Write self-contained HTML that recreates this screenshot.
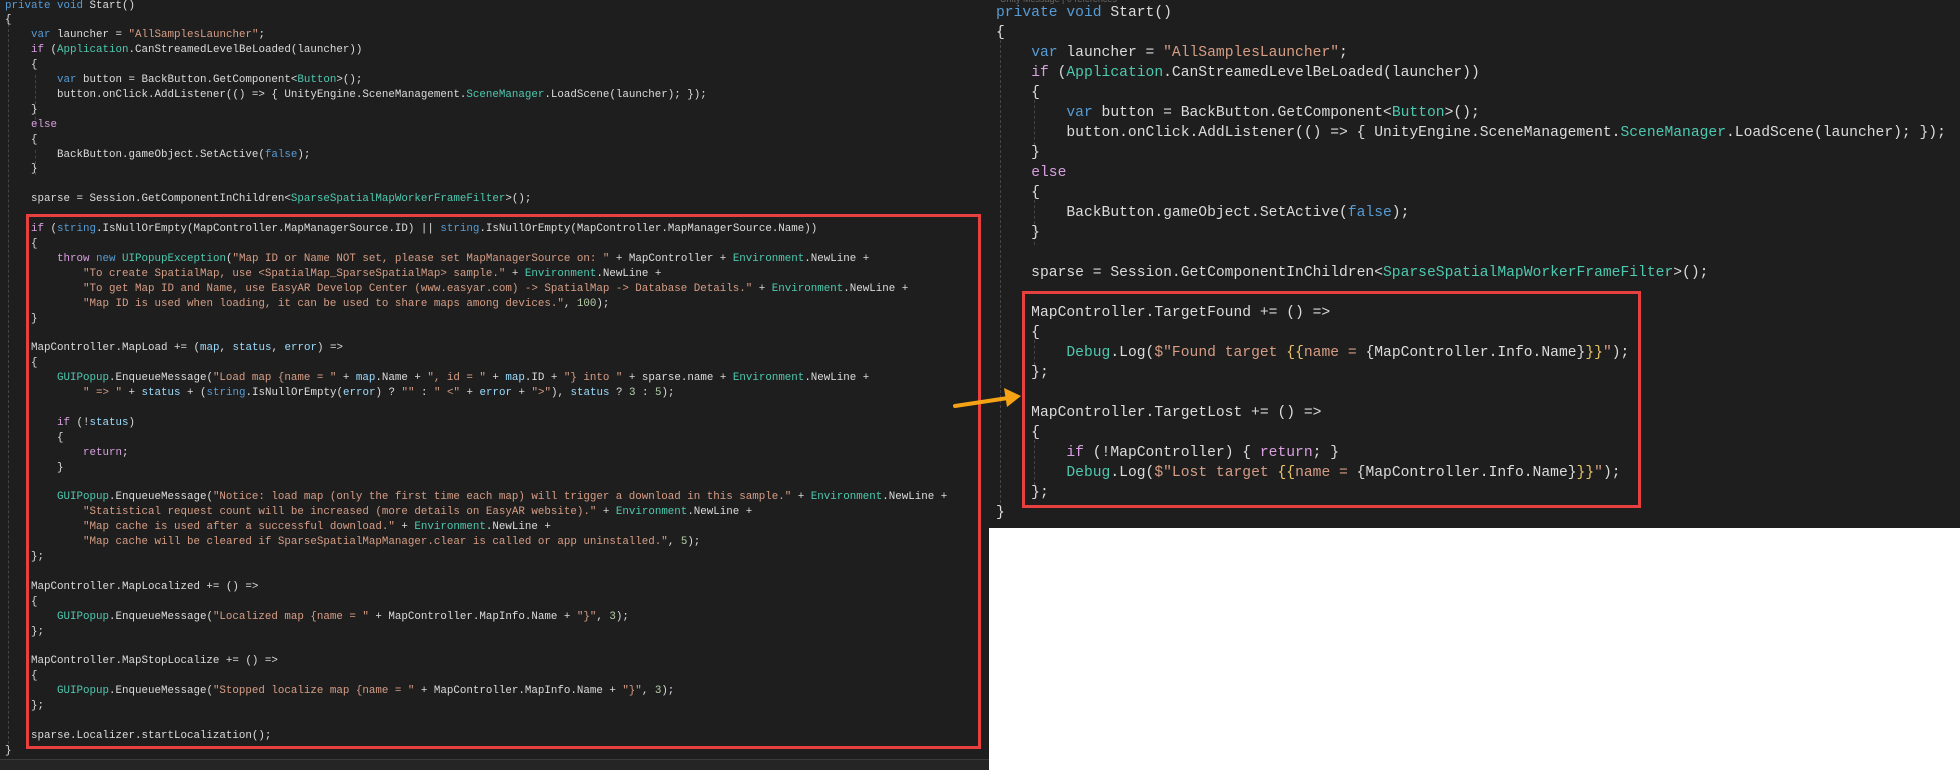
<!DOCTYPE html>
<html><head><meta charset="utf-8"><style>
html,body{margin:0;padding:0;width:1960px;height:770px;overflow:hidden;background:#fff;position:relative}
.panel{position:absolute;background:#1e1e1e}
pre{position:absolute;margin:0;font-family:"Liberation Mono",monospace;color:#dcdcdc;white-space:pre}
.L{left:5px;top:-1.5px;font-size:10.83px;line-height:14.9px}
.R{left:996px;top:3px;font-size:14.67px;line-height:20px}
.k{color:#569cd6}.c{color:#d8a0df}.s{color:#d69d85}.t{color:#4ec9b0}.p{color:#9cdcfe}.n{color:#b5cea8}
.box{position:absolute;border:3px solid #e8403f;box-sizing:border-box}
.g{position:absolute;width:0;border-left:1px dashed #444}
</style></head><body>
<div class="panel" style="left:0;top:0;width:989px;height:770px"></div>
<div style="position:absolute;left:0;top:759px;width:989px;height:1px;background:#3a3a3a"></div>
<div style="position:absolute;left:0;top:760px;width:989px;height:10px;background:#252526"></div>
<div class="panel" style="left:989px;top:0;width:971px;height:528px"></div>
<div style="position:absolute;left:1000px;top:-6px;font:9px 'Liberation Sans',sans-serif;color:#666">Unity Message | 0 references</div>

<div class="g" style="left:8px;top:14px;height:740px"></div>
<div class="g" style="left:35px;top:75px;height:50px"></div>
<div class="g" style="left:35px;top:150px;height:25px"></div>
<div class="g" style="left:1000px;top:25px;height:478px"></div>
<div class="g" style="left:1034px;top:100px;height:45px"></div>
<div class="g" style="left:1034px;top:200px;height:45px"></div>
<div class="g" style="left:1034px;top:340px;height:25px"></div>
<div class="g" style="left:1034px;top:440px;height:45px"></div>

<pre class="L"><span class="k">private</span> <span class="k">void</span> Start()
{
    <span class="k">var</span> launcher = <span class="s">"AllSamplesLauncher"</span>;
    <span class="c">if</span> (<span class="t">Application</span>.CanStreamedLevelBeLoaded(launcher))
    {
        <span class="k">var</span> button = BackButton.GetComponent&lt;<span class="t">Button</span>&gt;();
        button.onClick.AddListener(() =&gt; { UnityEngine.SceneManagement.<span class="t">SceneManager</span>.LoadScene(launcher); });
    }
    <span class="c">else</span>
    {
        BackButton.gameObject.SetActive(<span class="k">false</span>);
    }

    sparse = Session.GetComponentInChildren&lt;<span class="t">SparseSpatialMapWorkerFrameFilter</span>&gt;();

    <span class="c">if</span> (<span class="k">string</span>.IsNullOrEmpty(MapController.MapManagerSource.ID) || <span class="k">string</span>.IsNullOrEmpty(MapController.MapManagerSource.Name))
    {
        <span class="c">throw</span> <span class="k">new</span> <span class="t">UIPopupException</span>(<span class="s">"Map ID or Name NOT set, please set MapManagerSource on: "</span> + MapController + <span class="t">Environment</span>.NewLine +
            <span class="s">"To create SpatialMap, use &lt;SpatialMap_SparseSpatialMap&gt; sample."</span> + <span class="t">Environment</span>.NewLine +
            <span class="s">"To get Map ID and Name, use EasyAR Develop Center (www.easyar.com) -&gt; SpatialMap -&gt; Database Details."</span> + <span class="t">Environment</span>.NewLine +
            <span class="s">"Map ID is used when loading, it can be used to share maps among devices."</span>, <span class="n">100</span>);
    }

    MapController.MapLoad += (<span class="p">map</span>, <span class="p">status</span>, <span class="p">error</span>) =&gt;
    {
        <span class="t">GUIPopup</span>.EnqueueMessage(<span class="s">"Load map {name = "</span> + <span class="p">map</span>.Name + <span class="s">", id = "</span> + <span class="p">map</span>.ID + <span class="s">"} into "</span> + sparse.name + <span class="t">Environment</span>.NewLine +
            <span class="s">" =&gt; "</span> + <span class="p">status</span> + (<span class="k">string</span>.IsNullOrEmpty(<span class="p">error</span>) ? <span class="s">""</span> : <span class="s">" &lt;"</span> + <span class="p">error</span> + <span class="s">"&gt;"</span>), <span class="p">status</span> ? <span class="n">3</span> : <span class="n">5</span>);

        <span class="c">if</span> (!<span class="p">status</span>)
        {
            <span class="c">return</span>;
        }

        <span class="t">GUIPopup</span>.EnqueueMessage(<span class="s">"Notice: load map (only the first time each map) will trigger a download in this sample."</span> + <span class="t">Environment</span>.NewLine +
            <span class="s">"Statistical request count will be increased (more details on EasyAR website)."</span> + <span class="t">Environment</span>.NewLine +
            <span class="s">"Map cache is used after a successful download."</span> + <span class="t">Environment</span>.NewLine +
            <span class="s">"Map cache will be cleared if SparseSpatialMapManager.clear is called or app uninstalled."</span>, <span class="n">5</span>);
    };

    MapController.MapLocalized += () =&gt;
    {
        <span class="t">GUIPopup</span>.EnqueueMessage(<span class="s">"Localized map {name = "</span> + MapController.MapInfo.Name + <span class="s">"}"</span>, <span class="n">3</span>);
    };

    MapController.MapStopLocalize += () =&gt;
    {
        <span class="t">GUIPopup</span>.EnqueueMessage(<span class="s">"Stopped localize map {name = "</span> + MapController.MapInfo.Name + <span class="s">"}"</span>, <span class="n">3</span>);
    };

    sparse.Localizer.startLocalization();
}</pre>

<pre class="R"><span class="k">private</span> <span class="k">void</span> Start()
{
    <span class="k">var</span> launcher = <span class="s">"AllSamplesLauncher"</span>;
    <span class="c">if</span> (<span class="t">Application</span>.CanStreamedLevelBeLoaded(launcher))
    {
        <span class="k">var</span> button = BackButton.GetComponent&lt;<span class="t">Button</span>&gt;();
        button.onClick.AddListener(() =&gt; { UnityEngine.SceneManagement.<span class="t">SceneManager</span>.LoadScene(launcher); });
    }
    <span class="c">else</span>
    {
        BackButton.gameObject.SetActive(<span class="k">false</span>);
    }

    sparse = Session.GetComponentInChildren&lt;<span class="t">SparseSpatialMapWorkerFrameFilter</span>&gt;();

    MapController.TargetFound += () =&gt;
    {
        <span class="t">Debug</span>.Log(<span class="s">$"Found target </span><span style="color:#e9c46a">{{</span><span class="s">name = </span>{MapController.Info.Name}<span style="color:#e9c46a">}}</span><span class="s">"</span>);
    };

    MapController.TargetLost += () =&gt;
    {
        <span class="c">if</span> (!MapController) { <span class="c">return</span>; }
        <span class="t">Debug</span>.Log(<span class="s">$"Lost target </span><span style="color:#e9c46a">{{</span><span class="s">name = </span>{MapController.Info.Name}<span style="color:#e9c46a">}}</span><span class="s">"</span>);
    };
}</pre>

<div class="box" style="left:26px;top:214px;width:955px;height:535px"></div>
<div class="box" style="left:1022px;top:291px;width:619px;height:217px"></div>

<svg style="position:absolute;left:0;top:0" width="1960" height="770">
  <line x1="955" y1="406" x2="1008" y2="398" stroke="#f5a315" stroke-width="4" stroke-linecap="round"/>
  <polygon points="1021,396 1004,388 1007,407" fill="#f5a315"/>
</svg>
</body></html>
